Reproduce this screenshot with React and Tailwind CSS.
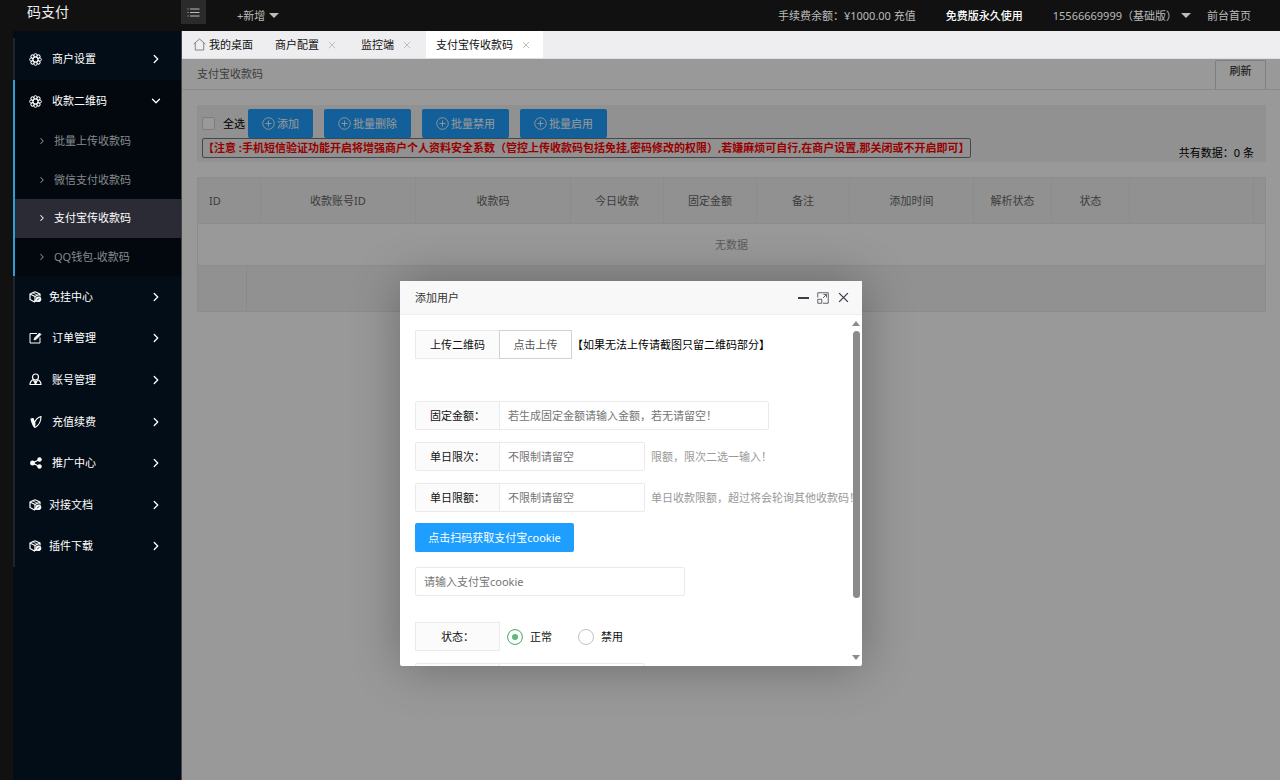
import { useState } from 'react'
import clsx from 'clsx'
import { ChevronRight, ChevronDown } from 'lucide-react'

function FlowerIcon() {
  return (
    <svg viewBox="0 0 26 26" className="w-[13px] h-[13px]" fill="none" stroke="currentColor" strokeWidth="2">
      {[0, 45, 90, 135, 180, 225, 270, 315].map((angle) => (
        <circle key={angle} cx="13" cy="4.5" r="3.2" transform={`rotate(${angle} 13 13)`} />
      ))}
      <circle cx="13" cy="13" r="5" />
    </svg>
  )
}

function CubeIcon() {
  return (
    <svg viewBox="0 0 26 24" className="w-[13px] h-3" fill="none" stroke="currentColor" strokeWidth="2.4" strokeLinejoin="round">
      <path d="M12 1.500 22 6v5M12 1.500 2 6v11L12 22.500M2 6l10 5 10-5M12 11v11" />
      <path d="M7 3.500l10 5" strokeWidth="1.600" />
      <circle cx="19" cy="16.500" r="5.500" fill="currentColor" stroke="none" />
      <path d="M11.500 19.500h10" strokeWidth="4" />
      <path d="M16 18.500l5-4" stroke="#030d17" strokeWidth="1.500" />
    </svg>
  )
}

function EditIcon() {
  return (
    <svg viewBox="0 0 26 24" className="w-[13px] h-3" fill="none" stroke="currentColor" strokeWidth="2">
      <path d="M16 3H2v19h20V11" />
      <path d="M10 16l1-4L21 2l3 3-10 10z" fill="currentColor" strokeWidth="1.500" />
    </svg>
  )
}

function UserIcon() {
  return (
    <svg viewBox="0 0 26 26" className="w-[13px] h-[13px]" fill="none" stroke="currentColor" strokeWidth="2.4" strokeLinejoin="round">
      <circle cx="13" cy="8" r="6" />
      <path d="M9 13c-4 2-7 5-7 10h22c0-5-3-8-7-10M9 14l4 8 4-8M13 15v7" />
    </svg>
  )
}

function LeafIcon() {
  return (
    <svg viewBox="0 0 24 24" className="w-3 h-3" fill="none" stroke="currentColor" strokeWidth="2.2" strokeLinejoin="round">
      <path d="M2 6l4-1 3 9C11 7 15 3 22 1c0 9-3 17-12 22-4-3-6-9-8-17z" />
      <path d="M3 7l6 14 1-5-4-10z" fill="currentColor" />
    </svg>
  )
}

function ShareIcon() {
  return (
    <svg viewBox="0 0 24 24" className="w-3 h-3" fill="currentColor" stroke="currentColor">
      <path d="M19 5L5 12l14 7" fill="none" strokeWidth="2.500" />
      <circle cx="19" cy="5" r="4" />
      <circle cx="5" cy="12" r="4.500" />
      <circle cx="19" cy="19" r="4" />
    </svg>
  )
}

function HomeIcon() {
  return (
    <svg viewBox="0 0 26 26" className="w-[13px] h-[13px] text-[#777]" fill="none" stroke="currentColor" strokeWidth="1.800">
      <path d="M1.500 12L13 2l11.500 10M4.500 10v14h17V10" />
    </svg>
  )
}

function PlusCircle() {
  return (
    <svg viewBox="0 0 26 26" className="w-[13px] h-[13px]" fill="none" stroke="currentColor" strokeWidth="1.800">
      <circle cx="13" cy="13" r="11.500" />
      <path d="M13 7v12M7 13h12" />
    </svg>
  )
}

function Cross({ className }) {
  return (
    <svg viewBox="0 0 10 10" className={className} fill="none" stroke="currentColor" strokeWidth="1.200">
      <path d="M1 1l8 8M9 1L1 9" />
    </svg>
  )
}

function Caret() {
  return (
    <svg viewBox="0 0 10 5" className="w-[10px] h-[5px]" fill="currentColor">
      <path d="M0 0h10L5 5z" />
    </svg>
  )
}

const subItems = ['批量上传收款码', '微信支付收款码', '支付宝传收款码', 'QQ钱包-收款码']

const menu = [
  { label: '免挂中心', icon: CubeIcon, tight: true },
  { label: '订单管理', icon: EditIcon },
  { label: '账号管理', icon: UserIcon },
  { label: '充值续费', icon: LeafIcon },
  { label: '推广中心', icon: ShareIcon },
  { label: '对接文档', icon: CubeIcon, tight: true },
  { label: '插件下载', icon: CubeIcon, tight: true },
]

const columns = [
  { label: 'ID', width: 'w-[63px]' },
  { label: '收款账号ID', width: 'w-[155px]' },
  { label: '收款码', width: 'w-[155px]' },
  { label: '今日收款', width: 'w-[93px]' },
  { label: '固定金额', width: 'w-[93px]' },
  { label: '备注', width: 'w-[93px]' },
  { label: '添加时间', width: 'w-[124px]' },
  { label: '解析状态', width: 'w-[78px]' },
  { label: '状态', width: 'w-[78px]' },
  { label: '', width: 'w-[124px]' },
  { label: '', width: '' },
]

function MenuItem({ label, icon: Icon, tight, open, className }) {
  return (
    <a href="#" className={clsx('flex items-center pl-[14px] pr-[18px] text-white', className)}>
      <span className="w-[13px] flex justify-center"><Icon /></span>
      <span className={clsx('flex-1', tight ? 'pl-[7px]' : 'pl-[10px]')}>{label}</span>
      {open ? (
        <ChevronDown className="w-[14px] h-[14px]" strokeWidth={2.2} />
      ) : (
        <ChevronRight className="w-[14px] h-[14px]" strokeWidth={2.2} />
      )}
    </a>
  )
}

function Sidebar() {
  return (
    <aside className="w-[168px] shrink-0 bg-[#030d17] pt-[7px]">
      <nav>
        <div className="border-l-2 border-[#20242a]">
          <MenuItem label="商户设置" icon={FlowerIcon} className="h-[42px]" />
        </div>
        <div className="border-l-2 border-[#2e9fd4] bg-[#02080e]">
          <MenuItem label="收款二维码" icon={FlowerIcon} open className="h-[42px]" />
          <div className="flex flex-col h-[154px]">
            {subItems.map((item, i) => (
              <a
                key={item}
                href="#"
                className={clsx(
                  'flex-1 flex items-center pl-[22px] gap-[7px]',
                  i === 2 ? 'bg-[#2a2b34] text-white' : 'text-[#868a8d]'
                )}
              >
                <ChevronRight className="w-[10px] h-[10px]" strokeWidth={2.5} />
                {item}
              </a>
            ))}
          </div>
        </div>
        <div className="flex flex-col h-[291px] border-l-2 border-[#20242a]">
          {menu.map((item) => (
            <MenuItem key={item.label} {...item} className="flex-1" />
          ))}
        </div>
      </nav>
    </aside>
  )
}

function Header() {
  return (
    <header className="h-[31px] flex bg-[#111] text-[#bbb]">
      <div className="w-[181px] pl-[27px] text-[14px] leading-6 text-[#eee]">码支付</div>
      <button className="w-[25px] h-6 bg-[#2b2b2b] flex items-center justify-center" aria-label="菜单">
        <svg viewBox="0 0 26 18" className="w-[13px] h-[9px]" fill="none" stroke="currentColor" strokeWidth="2">
          <path d="M1 2h2M6 2h19M1 9h2M6 9h19M1 16h2M6 16h19" />
        </svg>
      </button>
      <div className="flex-1 flex items-center justify-between pl-[31px] pr-[29px]">
        <button className="flex items-center gap-1">+新增 <Caret /></button>
        <div className="flex items-center gap-[30px]">
          <a href="#">手续费余额：¥1000.00 充值</a>
          <a href="#" className="text-white font-medium">免费版永久使用</a>
          <div className="flex items-center gap-4">
            <button className="flex items-center gap-1">15566669999（基础版） <Caret /></button>
            <a href="#">前台首页</a>
          </div>
        </div>
      </div>
    </header>
  )
}

function Tab({ label, active }) {
  return (
    <div className={clsx('flex items-center gap-[9px] pl-[10px] pr-[13px]', active && 'bg-white')}>
      <a href="#">{label}</a>
      <button aria-label={`关闭${label}`}>
        <Cross className="w-2 h-2 text-[#bbb]" />
      </button>
    </div>
  )
}

function ToolButton({ children }) {
  return (
    <button className="h-[29px] px-[14px] rounded-[2px] bg-[#1E9FFF] text-white flex items-center gap-[2px]">
      <PlusCircle />
      {children}
    </button>
  )
}

function ListPage() {
  return (
    <div>
      <div className="h-[31px] flex justify-between items-center pl-[15px] pr-[14px] border-b border-[#e5e5e5] text-[#666]">
        <span>支付宝收款码</span>
        <button className="self-end h-[29px] w-[51px] pb-[8px] border border-b-0 border-[#d2d2d2] rounded-t-[2px] font-medium text-[#444]">
          刷新
        </button>
      </div>
      <div className="pl-[15px] pr-[14px] pt-[15px]">
        <div className="flex justify-between bg-[#f2f2f2] px-[5px] pt-1">
          <div className="pb-1">
            <div className="flex gap-[11px]">
              <div className="flex items-center gap-[3px]">
                <label className="flex items-center gap-2">
                  <input type="checkbox" className="appearance-none w-[13px] h-[13px] border border-[#d2d2d2] bg-white rounded-[2px]" />
                  全选
                </label>
                <ToolButton>添加</ToolButton>
              </div>
              <ToolButton>批量删除</ToolButton>
              <ToolButton>批量禁用</ToolButton>
              <ToolButton>批量启用</ToolButton>
            </div>
            <p className="w-max border border-[#777] rounded-[2px] leading-[18px] font-bold text-[#f00] whitespace-nowrap">
              【注意 :手机短信验证功能开启将增强商户个人资料安全系数（管控上传收款码包括免挂,密码修改的权限）,若嫌麻烦可自行,在商户设置,那关闭或不开启即可】
            </p>
          </div>
          <span className="self-end pr-[7px] leading-[18px] text-black whitespace-nowrap">共有数据：0 条</span>
        </div>

        <table className="mt-[15px] w-full table-fixed border-collapse text-[#666]">
          <thead>
            <tr className="h-[46px] bg-[#f2f2f2]">
              {columns.map((col, i) => (
                <th
                  key={i}
                  className={clsx(col.width, 'border border-[#e9e9e9] px-[11px] font-normal', i === 0 ? 'text-left' : 'text-center')}
                >
                  {col.label}
                </th>
              ))}
            </tr>
          </thead>
          <tbody>
            <tr className="h-[42px]">
              <td colSpan={11} className="border border-[#e9e9e9] text-center text-[#999]">无数据</td>
            </tr>
          </tbody>
          <tfoot>
            <tr className="bg-[#f2f2f2]">
              <td colSpan={11} className="p-0 border border-[#e9e9e9]">
                <div className="w-[49px] h-[45px] border-r border-[#e6e6e6]" />
              </td>
            </tr>
          </tfoot>
        </table>
      </div>
    </div>
  )
}

function Field({ id, label, placeholder, hint, wide }) {
  return (
    <div className="flex items-center">
      <label htmlFor={id} className="w-[85px] h-[29px] shrink-0 leading-[27px] text-center border border-[#eaeaea] bg-[#fbfbfb] rounded-l-[2px]">
        {label}
      </label>
      <input
        id={id}
        type="text"
        placeholder={placeholder}
        className={clsx(
          wide ? 'w-[270px]' : 'w-[146px]',
          '-ml-px h-[29px] shrink-0 px-2 border border-[#eaeaea] rounded-r-[2px] placeholder:text-[#757575] outline-none'
        )}
      />
      {hint && <span className="pl-[6px] text-[#999] whitespace-nowrap">{hint}</span>}
    </div>
  )
}

function Radio({ label, ...props }) {
  return (
    <label className="flex items-center gap-[7px]">
      <input
        type="radio"
        name="status"
        className="appearance-none w-4 h-4 rounded-full border border-[#c2c2c2] checked:border-[#5FB878] checked:bg-[#5FB878] checked:shadow-[inset_0_0_0_4px_white]"
        {...props}
      />
      {label}
    </label>
  )
}

function AddUserModal({ onClose }) {
  return (
    <div role="dialog" aria-label="添加用户" className="absolute left-[218px] top-[222px] w-[462px] h-[385px] flex flex-col rounded-[2px] bg-white shadow-[1px_1px_50px_rgba(0,0,0,0.3)]">
      <div className="h-[34px] shrink-0 flex items-center justify-between pl-[15px] pr-[13px] bg-[#f8f8f8] border-b border-[#eee] text-[#333]">
        <span>添加用户</span>
        <div className="flex items-center gap-2 text-[#3f3d4d]">
          <button aria-label="最小化" className="w-3 h-3 flex items-center justify-end">
            <span className="w-[11px] h-[2px] bg-[#3f3d4d]" />
          </button>
          <button aria-label="最大化">
            <svg viewBox="0 0 24 24" className="w-3 h-3" fill="none" stroke="currentColor" strokeWidth="1.600">
              <path d="M1.500 11V1.500h21v21H12M1.500 14.500h8v8h-8zM12 12l7-7M13 5h6v6" />
            </svg>
          </button>
          <button aria-label="关闭" onClick={onClose} className="w-3 h-3 flex items-center justify-center">
            <Cross className="w-[11px] h-[11px]" />
          </button>
        </div>
      </div>

      <div className="flex-1 min-h-0 relative">
        <form className="h-full overflow-hidden pl-[15px] pt-[15px] text-[#111]" onSubmit={(e) => e.preventDefault()}>
          <div className="flex items-center">
            <span className="w-[85px] h-[29px] leading-[27px] text-center border border-[#eaeaea] bg-[#fbfbfb]">上传二维码</span>
            <button type="button" className="-ml-px w-[73px] h-[29px] border border-[#d2d2d2] bg-white text-[#555]">点击上传</button>
            <span className="text-black">【如果无法上传请截图只留二维码部分】</span>
          </div>

          <div className="mt-[42px] flex flex-col gap-3">
            <Field id="amount" label="固定金额：" placeholder="若生成固定金额请输入金额，若无请留空！" wide />
            <Field id="dayCount" label="单日限次：" placeholder="不限制请留空" hint="限额，限次二选一输入！" />
            <Field id="dayLimit" label="单日限额：" placeholder="不限制请留空" hint="单日收款限额，超过将会轮询其他收款码！" />
          </div>

          <button type="button" className="mt-[11px] block w-[159px] h-[29px] rounded-[2px] bg-[#1E9FFF] text-white">
            点击扫码获取支付宝cookie
          </button>
          <input
            type="text"
            aria-label="支付宝cookie"
            placeholder="请输入支付宝cookie"
            className="mt-[15px] block w-[270px] h-[29px] px-2 border border-[#eaeaea] rounded-[2px] placeholder:text-[#757575] outline-none"
          />

          <div className="mt-[26px] mb-3 flex items-center">
            <span className="w-[85px] h-[29px] leading-[27px] text-center border border-[#eaeaea] bg-[#fbfbfb]">状态：</span>
            <div className="flex gap-[26px] pl-[7px]">
              <Radio label="正常" value="1" defaultChecked />
              <Radio label="禁用" value="0" />
            </div>
          </div>
          <Field id="remark" label="" placeholder="" />
        </form>

        {/* scrollbar */}
        <div className="absolute inset-y-0 right-0 w-3 flex flex-col items-center justify-between py-[6px] text-[#8b8b8b]">
          <div className="flex flex-col items-center gap-[5px]">
            <svg viewBox="0 0 8 5" className="w-2 h-[5px]" fill="currentColor"><path d="M0 5h8L4 0z" /></svg>
            <div className="w-[7px] h-[267px] rounded-full bg-[#8b8b8b]" />
          </div>
          <svg viewBox="0 0 8 5" className="w-2 h-[5px]" fill="currentColor"><path d="M0 0h8L4 5z" /></svg>
        </div>
      </div>
    </div>
  )
}

export default function App() {
  const [showModal, setShowModal] = useState(true)

  return (
    <div className="min-h-screen flex flex-col bg-[#111] text-[11px] leading-4 font-['Noto_Sans','Noto_Sans_CJK_SC',sans-serif]">
      <Header />
      <div className="flex-1 flex pl-[13px]">
        <Sidebar />
        <main className="flex-1 min-w-0 flex flex-col border-l border-[#444] bg-white">
          <div className="h-7 flex gap-[2px] bg-[#eeeef0] border-b border-[#ddd] text-[#111]">
            <a href="#" className="flex items-center gap-[3px] pl-[11px] pr-[10px]"><HomeIcon />我的桌面</a>
            <Tab label="商户配置" />
            <Tab label="监控端" />
            <Tab label="支付宝传收款码" active />
          </div>
          <div className="flex-1 relative">
            <ListPage />
            {showModal && (
              <>
                <div className="absolute inset-0 bg-black/40" />
                <AddUserModal onClose={() => setShowModal(false)} />
              </>
            )}
          </div>
        </main>
      </div>
    </div>
  )
}
